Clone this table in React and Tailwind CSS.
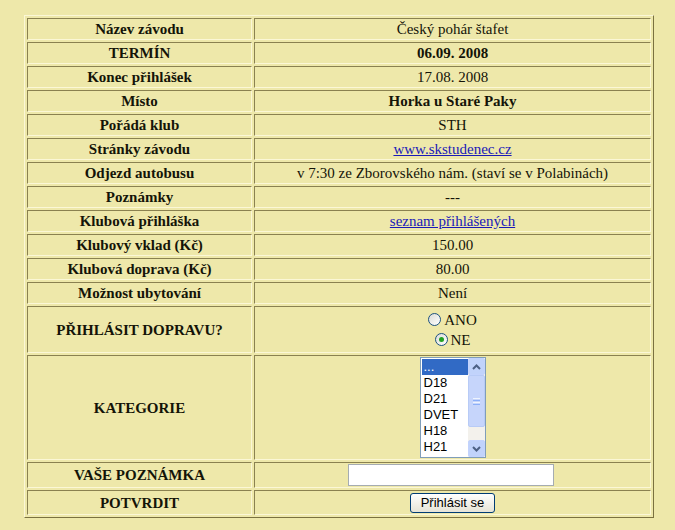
import React from 'react';

const rows = [
  { label: 'Název závodu', value: 'Český pohár štafet' },
  { label: 'TERMÍN', value: '06.09. 2008', bold: true },
  { label: 'Konec přihlášek', value: '17.08. 2008' },
  { label: 'Místo', value: 'Horka u Staré Paky', bold: true },
  { label: 'Pořádá klub', value: 'STH' },
  { label: 'Stránky závodu', value: 'www.skstudenec.cz', link: true },
  { label: 'Odjezd autobusu', value: 'v 7:30 ze Zborovského nám. (staví se v Polabinách)' },
  { label: 'Poznámky', value: '---' },
  { label: 'Klubová přihláška', value: 'seznam přihlášených', link: true },
  { label: 'Klubový vklad (Kč)', value: '150.00' },
  { label: 'Klubová doprava (Kč)', value: '80.00' },
  { label: 'Možnost ubytování', value: 'Není' },
];

const categories = ['...', 'D18', 'D21', 'DVET', 'H18', 'H21'];

const cell =
  'p-0 text-center align-middle border border-t-[#8a8150] border-l-[#8a8150] border-b-[#fbf7d6] border-r-[#fbf7d6]';

function Radio({ checked, label }) {
  return (
    <div className="flex items-center justify-center h-[20px]">
      <span className="relative inline-block w-[13px] h-[13px] rounded-full border border-[#1c5180] bg-gradient-to-br from-[#dcdcd7] to-white mr-[3px]">
        {checked && (
          <span className="absolute left-[3px] top-[3px] w-[5px] h-[5px] rounded-full bg-[#21a121]" />
        )}
      </span>
      <span>{label}</span>
    </div>
  );
}

function CategoryList() {
  return (
    <div className="inline-flex w-[66px] h-[101px] border border-[#7f9db9] bg-white text-left align-middle">
      <div className="flex-1 pt-[1px] pl-[1px] font-[Liberation_Sans,Arial,sans-serif] text-[13px] leading-[16px] text-black">
        {categories.map((c, i) => (
          <div
            key={c}
            className={i === 0 ? 'bg-[#316ac5] text-white pl-[2px]' : 'pl-[2px]'}
          >
            {c}
          </div>
        ))}
      </div>
      <div className="w-[17px] flex flex-col bg-[#f3f1ec]">
        <div className="h-[17px] rounded-[2px] border border-[#c3d3fd] bg-[#c1d3fb] flex items-center justify-center">
          <svg width="9" height="6" viewBox="0 0 9 6">
            <path d="M1 5 L4.5 1.5 L8 5" fill="none" stroke="#4d6185" strokeWidth="2" />
          </svg>
        </div>
        <div className="h-[52px] rounded-[2px] border border-[#b8cbf6] bg-[#c6d5fb] flex flex-col items-center justify-center gap-[1px]">
          <div className="w-[7px] h-[1px] bg-[#eef4fe]" />
          <div className="w-[7px] h-[1px] bg-[#8cb0f8]" />
          <div className="w-[7px] h-[1px] bg-[#eef4fe]" />
          <div className="w-[7px] h-[1px] bg-[#8cb0f8]" />
        </div>
        <div className="flex-1" />
        <div className="h-[17px] rounded-[2px] border border-[#c3d3fd] bg-[#c1d3fb] flex items-center justify-center">
          <svg width="9" height="6" viewBox="0 0 9 6">
            <path d="M1 1 L4.5 4.5 L8 1" fill="none" stroke="#4d6185" strokeWidth="2" />
          </svg>
        </div>
      </div>
    </div>
  );
}

export default function App() {
  return (
    <div className="min-h-[530px] w-[675px] bg-[#eee8aa] pt-[15px] pl-[24px] font-[Liberation_Serif,Times_New_Roman,serif] text-[15px] leading-[20px] text-[#141408]">
      <table className="w-[630px] table-fixed border-separate border-spacing-[2px] border border-t-[#fbf7d6] border-l-[#fbf7d6] border-b-[#7a7140] border-r-[#7a7140]">
        <colgroup>
          <col className="w-[225px]" />
          <col className="w-[397px]" />
        </colgroup>
        <tbody>
          {rows.map((r) => (
            <tr key={r.label} className="h-[22px]">
              <td className={`${cell} font-bold`}>{r.label}</td>
              <td className={`${cell} ${r.bold ? 'font-bold' : ''}`}>
                {r.link ? (
                  <a href="#" className="text-[#1a1ab8] underline">
                    {r.value}
                  </a>
                ) : (
                  r.value
                )}
              </td>
            </tr>
          ))}
          <tr className="h-[47px]">
            <td className={`${cell} font-bold`}>PŘIHLÁSIT DOPRAVU?</td>
            <td className={cell}>
              <Radio label="ANO" />
              <Radio checked label="NE" />
            </td>
          </tr>
          <tr className="h-[105px]">
            <td className={`${cell} font-bold`}>KATEGORIE</td>
            <td className={cell}>
              <CategoryList />
            </td>
          </tr>
          <tr className="h-[26px]">
            <td className={`${cell} font-bold`}>VAŠE POZNÁMKA</td>
            <td className={`${cell} pr-[4px]`}>
              <input
                type="text"
                className="w-[206px] h-[22px] align-middle bg-white border border-[#a5acb2] outline-none"
              />
            </td>
          </tr>
          <tr className="h-[25px]">
            <td className={`${cell} font-bold`}>POTVRDIT</td>
            <td className={cell}>
              <button
                type="button"
                className="w-[85px] h-[20px] align-middle rounded-[3px] border border-[#003c74] bg-gradient-to-b from-white to-[#e6e3d6] font-[Liberation_Sans,Arial,sans-serif] text-[13px] leading-[16px] text-black"
              >
                Přihlásit se
              </button>
            </td>
          </tr>
        </tbody>
      </table>
    </div>
  );
}
